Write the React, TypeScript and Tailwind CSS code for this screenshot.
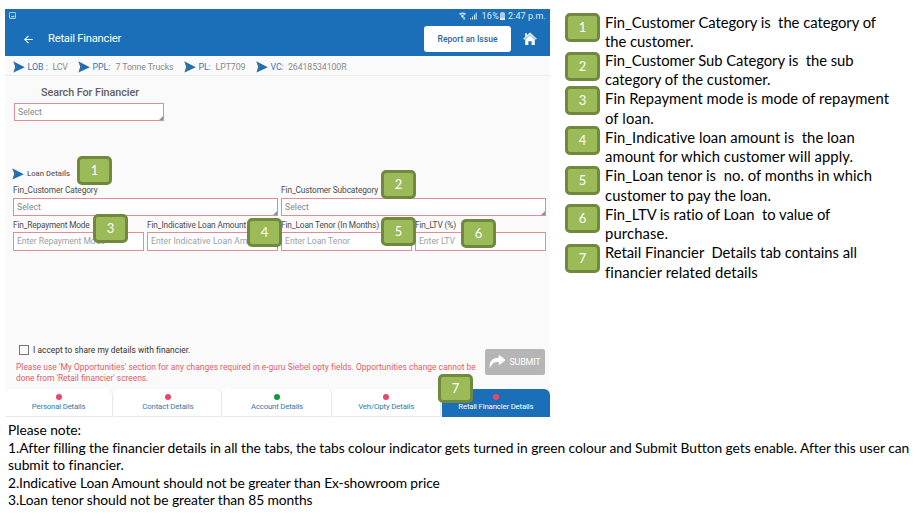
import { useLayoutEffect, useRef, useState, type ReactNode } from "react";

const NOTE_FONT = "font-['Lato','Liberation_Sans',sans-serif]";

/* One line of text whose tracking is adjusted so that it spans `width` pixels. */
function Line({ text, width, className = "" }: { text: string; width: number; className?: string }) {
  const ref = useRef<HTMLSpanElement>(null);
  const [spacing, setSpacing] = useState(0);
  useLayoutEffect(() => {
    const el = ref.current;
    if (!el) return;
    el.style.letterSpacing = "0px";
    const natural = el.getBoundingClientRect().width;
    const next = (width - natural) / text.length;
    el.style.letterSpacing = `${next}px`;
    setSpacing(next);
  }, [text, width]);
  return (
    <span ref={ref} className={`inline-block shrink-0 whitespace-pre ${className}`} style={{ letterSpacing: `${spacing}px` }}>
      {text}
    </span>
  );
}

function Badge({ n, className = "" }: { n: number; className?: string }) {
  return (
    <div
      className={`flex h-[29px] w-[35px] shrink-0 items-center justify-center rounded-[5px] border-[3px] border-[#71893f] bg-[#9bbb59] pb-px text-[13px] leading-none text-white ${NOTE_FONT} ${className}`}
    >
      {n}
    </div>
  );
}

function Chevron() {
  return (
    <svg className="h-[12px] w-[12px] shrink-0" viewBox="0 0 12 12">
      <path d="M0.2 0.2 L11.8 6.2 L0.5 11.6 L3.6 6 Z" fill="#1b6fb3" />
      <path d="M0.2 0.2 L3.6 6 L0.5 11.6 L1.2 9 L2.4 6 Z" fill="#17406b" />
    </svg>
  );
}

function Crumb({ label, labelWidth, value, valueWidth, gap, className }: {
  label: string; labelWidth: number; value: string; valueWidth: number; gap: string; className: string;
}) {
  return (
    <div className={`flex shrink-0 items-center text-[8.8px] leading-[12px] ${className}`}>
      <Chevron />
      <Line text={label} width={labelWidth} className="ml-[2.5px] text-[#2a78b4]" />
      <Line text={value} width={valueWidth} className={`text-[#8a8a8a] ${gap}`} />
    </div>
  );
}

function Field({ text, width, select = false, className }: { text: string; width: number; select?: boolean; className: string }) {
  return (
    <div className={`flex items-center justify-between overflow-hidden border border-[#e58c92] bg-white pl-[3px] text-[8.6px] leading-none ${className}`}>
      <Line text={text} width={width} className={select ? "text-[#858585]" : "text-[#9aa1a3]"} />
      {select && (
        <svg className="h-[4px] w-[4px] self-end" viewBox="0 0 4 4">
          <path d="M4 0V4H0Z" fill="#6e9fae" />
        </svg>
      )}
    </div>
  );
}

function Label({ text, width }: { text: string; width: number }) {
  return <Line text={text} width={width} className="h-[12px] text-[8.3px] leading-[12px] text-[#4c4c4c]" />;
}

function Group({ children, className }: { children: ReactNode; className: string }) {
  return <div className={`flex flex-col items-start ${className}`}>{children}</div>;
}

const tabs = [
  { label: "Personal Details", width: 53.5, dot: "bg-[#e8466a]" },
  { label: "Contact Details", width: 51, dot: "bg-[#e8466a]" },
  { label: "Account Details", width: 52, dot: "bg-[#0c9a3c]" },
  { label: "Veh/Opty Details", width: 56, dot: "bg-[#e8466a]" },
  { label: "Retail Financier Details", width: 75, dot: "bg-[#e8466a]", active: true },
];

function Device() {
  return (
    <div className="relative flex h-[408px] w-[545px] shrink-0 flex-col bg-[#fafafa] font-['Roboto','Liberation_Sans',sans-serif]">
      <header className="h-[47px] bg-[#1b6fb8] text-white">
        <div className="flex h-[13px] items-center justify-between pl-[4px] pr-[4px]">
          <svg className="h-[7px] w-[7px]" viewBox="0 0 7 7" fill="none" stroke="#b9dcf5">
            <rect x="0.5" y="0.5" width="6" height="6" rx="0.6" strokeWidth="0.9" />
            <path d="M1.5 5.2L2.8 3.7L3.8 4.6L4.8 3.2L5.6 5.2Z" fill="#b9dcf5" stroke="none" />
          </svg>
          <div className="flex items-center pt-px text-[9px] leading-none text-[#dcebf8]">
            <svg className="h-[8px] w-[18px]" viewBox="0 0 18 8" fill="#c4def3">
              <path d="M0 1.6Q3.5-0.8 7 1.6L6 3Q3.5 1.3 1 3Z" />
              <path d="M1.6 3.7Q3.5 2.3 5.4 3.7L3.5 6.2Z" />
              <path d="M4.2 5.2h2v2.4h-2z" opacity=".8" />
              <path d="M11 6h1.2v1.6H11zM13 4.4h1.2v3.2H13zM15 2.6h1v5h-1zM16.6 0.8h1.2v6.8h-1.2z" />
            </svg>
            <Line text="16%" width={17.5} className="ml-[5px]" />
            <svg className="ml-px h-[8px] w-[5px]" viewBox="0 0 5 8">
              <path d="M1.3 0h2.4v0.8H5V8H0V0.8H1.3Z" fill="#a9cdec" />
              <path d="M0 6.2h5V8H0z" fill="#e8f3fc" />
            </svg>
            <Line text="2:47 p.m." width={38} className="ml-[3px]" />
          </div>
        </div>
        <div className="flex h-[34px] items-center pl-[19px]">
          <svg className="h-[9px] w-[9px]" viewBox="0 0 9 9" fill="none" stroke="white" strokeWidth="1.1">
            <path d="M8.8 4.5H1M4.5 0.8L0.8 4.5L4.5 8.2" />
          </svg>
          <Line text="Retail Financier" width={73} className="ml-[15px] pt-px text-[11.2px]" />
          <button className="ml-auto flex h-[26px] w-[87px] items-center justify-center rounded-[3px] bg-white text-[8.6px] font-medium text-[#2b68a0]">
            <Line text="Report an Issue" width={60} />
          </button>
          <svg className="ml-[12px] mr-[13px] h-[14px] w-[14px]" viewBox="0 0 14 14">
            <path d="M2.2 7.4L7 3L11.8 7.4V13H8.6V9.2H5.4V13H2.2Z" fill="white" />
            <path d="M0.7 7.2L7 1.4L13.3 7.2" fill="none" stroke="white" strokeWidth="1.3" />
            <path d="M2.2 1.2H4V3.2L2.2 4.8Z" fill="white" />
          </svg>
        </div>
      </header>

      <nav className="flex h-[20px] items-center border-b border-[#ececec] pl-[8px] pt-[3px]">
        <Crumb label="LOB :" labelWidth={20.5} value="LCV" valueWidth={15} gap="ml-[4.5px]" className="w-[65px]" />
        <Crumb label="PPL:" labelWidth={18} value="7 Tonne Trucks" valueWidth={58} gap="ml-[5px]" className="w-[106px]" />
        <Crumb label="PL:" labelWidth={12} value="LPT709" valueWidth={30} gap="ml-[5px]" className="w-[72px]" />
        <Crumb label="VC:" labelWidth={13} value="26418534100R" valueWidth={58.5} gap="ml-[4.5px]" className="" />
      </nav>

      <div className="flex h-[82px] flex-col items-start pl-[9px] pt-[9px]">
        <Line text="Search For Financier" width={98} className="ml-[27px] h-[14px] text-[10.8px] font-medium leading-[15px] text-[#616161]" />
        <Field text="Select" width={24} select className="mt-[4px] h-[18px] w-[150px]" />
      </div>

      <section className="flex flex-col pl-[8px] pr-[4px]">
        <div className="flex h-[26px] items-center">
          <div className="-ml-px mt-[5px] flex items-center">
            <Chevron />
            <Line text="Loan Details" width={43} className="ml-[3px] text-[7.7px] font-medium text-[#666]" />
          </div>
        </div>
        <div className="flex gap-[3px]">
          <Group className="w-[265px]">
            <Label text="Fin_Customer Category" width={84.5} />
            <Field text="Select" width={24} select className="mt-[2px] h-[18px] w-full" />
          </Group>
          <Group className="flex-1">
            <Label text="Fin_Customer Subcategory" width={97} />
            <Field text="Select" width={24} select className="mt-[2px] h-[18px] w-full" />
          </Group>
        </div>
        <div className="mt-[3px] grid grid-cols-[131px_131px_131px_131px] gap-[3px]">
          <Group className="min-w-0">
            <Label text="Fin_Repayment Mode" width={76.5} />
            <Field text="Enter Repayment Mode" width={88} className="mt-px h-[19px] w-full" />
          </Group>
          <Group className="min-w-0">
            <Label text="Fin_Indicative Loan Amount" width={99} />
            <Field text="Enter Indicative Loan Amount" width={114} className="mt-px h-[19px] w-full" />
          </Group>
          <Group className="min-w-0">
            <Label text="Fin_Loan Tenor (In Months)" width={98} />
            <Field text="Enter Loan Tenor" width={65} className="mt-px h-[19px] w-full" />
          </Group>
          <Group className="min-w-0">
            <Label text="Fin_LTV (%)" width={41} />
            <Field text="Enter LTV" width={36} className="mt-px h-[19px] w-full" />
          </Group>
        </div>
      </section>

      <div className="mt-auto flex h-[46px] items-start">
        <div className="flex w-[480px] flex-col items-start pl-[11px] pt-px">
          <div className="flex h-[12px] items-center pl-[3px]">
            <span className="h-[10px] w-[10px] border border-[#777]" />
            <Line text="I accept to share my details with financier." width={157} className="ml-[4px] text-[8.4px] text-[#333]" />
          </div>
          <div className="mt-[6px] flex flex-col items-start text-[8.4px] leading-[10.5px] text-[#dd5e68]">
            <Line text="Please use 'My Opportunities' section for any changes required in e-guru Siebel opty fields. Opportunities change cannot be" width={459.5} />
            <Line text="done from 'Retail financier' screens." width={132} />
          </div>
        </div>
        <button className="mt-[6px] flex h-[26px] w-[60px] items-center rounded-[2px] bg-[#b5b5b5] pl-[4px] text-[9px] text-white">
          <svg className="h-[15px] w-[17px]" viewBox="0 0 17 15">
            <path d="M0.8 13.5C-0.2 6.5 3.5 2.7 9.8 2.8V-0.3L16.8 5L9.8 10.3V7.1C5.3 6.9 2.5 8.8 0.8 13.5Z" fill="white" />
          </svg>
          <Line text="SUBMIT" width={31} className="ml-[3.5px] pt-px" />
        </button>
      </div>

      <div className="flex h-[28px] gap-px">
        {tabs.map((t) => (
          <div
            key={t.label}
            className={`flex w-[108.2px] flex-col items-center pt-[5px] text-[7.8px] leading-none ${
              t.active
                ? "rounded-tr-[6px] bg-[#1b6fb8] text-white"
                : "rounded-t-[6px] border-b border-r border-[#e9e9e9] bg-white text-[#2f7ba6]"
            }`}
          >
            <span className={`h-[6px] w-[6px] shrink-0 rounded-full ${t.dot}`} />
            <Line text={t.label} width={t.width} className="mt-[3px]" />
          </div>
        ))}
      </div>

      <Badge n={1} className="absolute left-[72px] top-[147px]" />
      <Badge n={2} className="absolute left-[376px] top-[161px]" />
      <Badge n={3} className="absolute left-[88px] top-[205px]" />
      <Badge n={4} className="absolute left-[242px] top-[209px]" />
      <Badge n={5} className="absolute left-[376px] top-[208px]" />
      <Badge n={6} className="absolute left-[456px] top-[210px]" />
      <Badge n={7} className="absolute left-[433px] top-[365px]" />
    </div>
  );
}

const legend: [string, number][] = [
  ["Fin_Customer Category is  the category of", 271],
  ["the customer.", 88.5],
  ["Fin_Customer Sub Category is  the sub", 248.5],
  ["category of the customer.", 165.5],
  ["Fin Repayment mode is mode of repayment", 284],
  ["of loan.", 49],
  ["Fin_Indicative loan amount is  the loan", 250],
  ["amount for which customer will apply.", 248],
  ["Fin_Loan tenor is  no. of months in which", 267],
  ["customer to pay the loan.", 166],
  ["Fin_LTV is ratio of Loan  to value of", 225.5],
  ["purchase.", 63],
  ["Retail Financier  Details tab contains all", 252],
  ["financier related details", 152.5],
];

const notes: [string, number][] = [
  ["Please note:", 73],
  ["1.After filling the financier details in all the tabs, the tabs colour indicator gets turned in green colour and Submit Button gets enable. After this user can", 899.5],
  ["submit to financier.", 115.5],
  ["2.Indicative Loan Amount should not be greater than Ex-showroom price", 432],
  ["3.Loan tenor should not be greater than 85 months", 304.5],
];

export default function App() {
  return (
    <div className="flex h-[518px] w-[919px] flex-col overflow-hidden bg-white">
      <div className="flex pl-[5px] pt-[9px]">
        <Device />
        <aside className="flex pl-[15px]">
          <div className="flex flex-col pt-[4px]">
            <Badge n={1} />
            <Badge n={2} className="mt-[10px]" />
            <Badge n={3} className="mt-[5px]" />
            <Badge n={4} className="mt-[11px]" />
            <Badge n={5} className="mt-[11px]" />
            <Badge n={6} className="mt-[9px]" />
            <Badge n={7} className="mt-[11px]" />
          </div>
          <div className={`ml-[5px] flex flex-col items-start pt-[3.5px] text-[14.8px] leading-[19.23px] text-black ${NOTE_FONT}`}>
            {legend.map(([text, width]) => (
              <Line key={text} text={text} width={width} />
            ))}
          </div>
        </aside>
      </div>
      <div className={`flex flex-col items-start pl-[8px] pt-[4px] text-[13.8px] leading-[17.6px] text-black ${NOTE_FONT}`}>
        {notes.map(([text, width]) => (
          <Line key={text} text={text} width={width} />
        ))}
      </div>
    </div>
  );
}
